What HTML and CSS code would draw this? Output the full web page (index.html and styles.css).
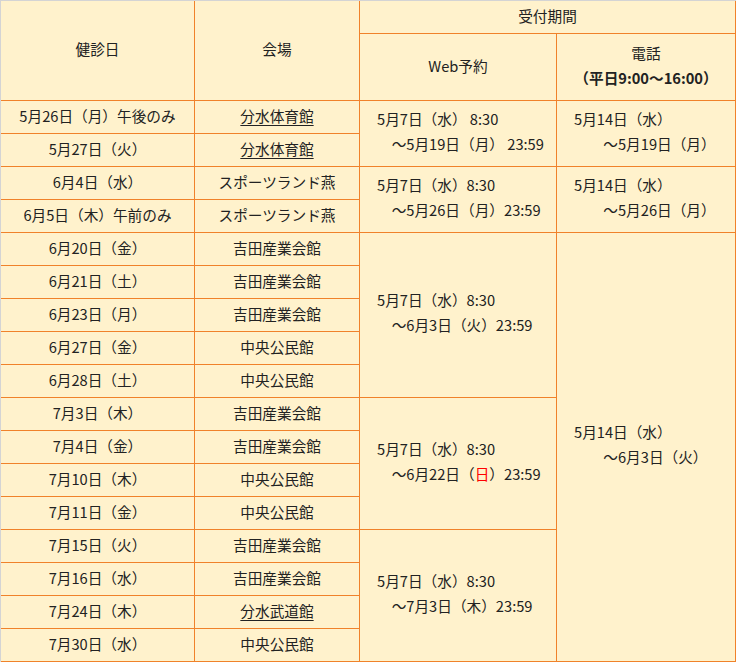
FILE: index.html
```html
<!DOCTYPE html>
<html lang="ja">
<head>
<meta charset="utf-8">
<title>健診日程</title>
<link rel="stylesheet" href="styles.css">
</head>
<body>
<table class="schedule">
  <colgroup>
    <col class="c-date">
    <col class="c-venue">
    <col class="c-web">
    <col class="c-tel">
  </colgroup>
  <thead>
    <tr class="h1">
      <th rowspan="2">健診日</th>
      <th rowspan="2">会場</th>
      <th colspan="2">受付期間</th>
    </tr>
    <tr class="h2">
      <th>Web予約</th>
      <th class="multi">電話<br><b>（平日9:00～16:00）</b></th>
    </tr>
  </thead>
  <tbody>
    <tr>
      <td>5月26日（月）午後のみ</td>
      <td><a class="venue-link">分水体育館</a></td>
      <td rowspan="2" class="period">5月7日（水） 8:30<br>　～5月19日（月） 23:59</td>
      <td rowspan="2" class="period">5月14日（水）<br>　　～5月19日（月）</td>
    </tr>
    <tr>
      <td>5月27日（火）</td>
      <td><a class="venue-link">分水体育館</a></td>
    </tr>
    <tr>
      <td>6月4日（水）</td>
      <td>スポーツランド燕</td>
      <td rowspan="2" class="period">5月7日（水）8:30<br>　～5月26日（月）23:59</td>
      <td rowspan="2" class="period">5月14日（水）<br>　　～5月26日（月）</td>
    </tr>
    <tr>
      <td>6月5日（木）午前のみ</td>
      <td>スポーツランド燕</td>
    </tr>
    <tr>
      <td>6月20日（金）</td>
      <td>吉田産業会館</td>
      <td rowspan="5" class="period">5月7日（水）8:30<br>　～6月3日（火）23:59</td>
      <td rowspan="13" class="period">5月14日（水）<br>　　～6月3日（火）</td>
    </tr>
    <tr><td>6月21日（土）</td><td>吉田産業会館</td></tr>
    <tr><td>6月23日（月）</td><td>吉田産業会館</td></tr>
    <tr><td>6月27日（金）</td><td>中央公民館</td></tr>
    <tr><td>6月28日（土）</td><td>中央公民館</td></tr>
    <tr>
      <td>7月3日（木）</td>
      <td>吉田産業会館</td>
      <td rowspan="4" class="period">5月7日（水）8:30<br>　～6月22日（<span class="sun">日</span>）23:59</td>
    </tr>
    <tr><td>7月4日（金）</td><td>吉田産業会館</td></tr>
    <tr><td>7月10日（木）</td><td>中央公民館</td></tr>
    <tr><td>7月11日（金）</td><td>中央公民館</td></tr>
    <tr>
      <td>7月15日（火）</td>
      <td>吉田産業会館</td>
      <td rowspan="4" class="period">5月7日（水）8:30<br>　～7月3日（木）23:59</td>
    </tr>
    <tr><td>7月16日（水）</td><td>吉田産業会館</td></tr>
    <tr><td>7月24日（木）</td><td><a class="venue-link">分水武道館</a></td></tr>
    <tr><td>7月30日（水）</td><td>中央公民館</td></tr>
  </tbody>
</table>
</body>
</html>
```
FILE: styles.css
```css
html, body {
  margin: 0;
  padding: 0;
  background: #fff2cc;
}

body {
  font-family: "Noto Sans CJK JP", "Noto Sans", sans-serif;
  font-size: 14.67px;
  color: #222;
}

.schedule {
  table-layout: fixed;
  border-collapse: separate;
  border-spacing: 0;
  width: 736px;
  border-top: 1px solid #d4d4d4;
  border-left: 1px solid #d4d4d4;
  background: #fff2cc;
}

.c-date { width: 194px; }
.c-venue { width: 165px; }
.c-web { width: 197px; }
.c-tel { width: 179px; }

.schedule th,
.schedule td {
  box-sizing: border-box;
  border-right: 1px solid #f0822a;
  border-bottom: 1px solid #f0822a;
  padding: 0 0 4px 0;
  text-align: center;
  vertical-align: middle;
  font-weight: normal;
  line-height: 25px;
  white-space: nowrap;
}

.schedule tr { height: 33px; }
.schedule tr.h1 { height: 33px; }
.schedule tr.h2 { height: 67px; }

.schedule td.period {
  text-align: left;
  padding: 0 0 6px 17px;
}

.schedule th.multi {
  padding-bottom: 5px;
}

.schedule th.multi b {
  font-weight: bold;
}

.venue-link {
  color: #222;
  text-decoration: underline;
  text-underline-offset: 3px;
}

.sun {
  color: #ff0000;
}
```
